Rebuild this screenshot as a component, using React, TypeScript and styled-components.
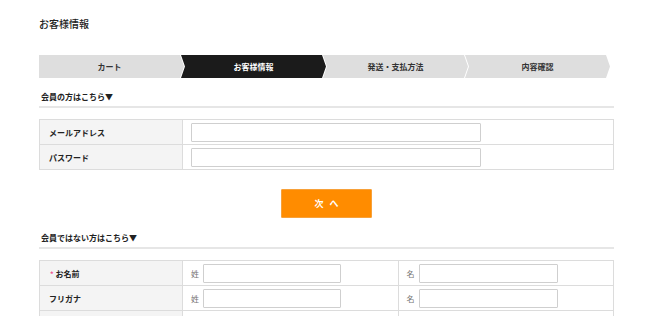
import styled, { createGlobalStyle } from "styled-components";

const GlobalStyle = createGlobalStyle`
  html, body {
    margin: 0;
    padding: 0;
    background: #fff;
    overflow: hidden;
  }
  body {
    font-family: "Noto Sans CJK JP", "Liberation Sans", sans-serif;
    color: #222;
  }
`;

const Page = styled.div`
  width: 575px;
  padding: 17px 0 0 39px;
`;

const Title = styled.h1`
  margin: 0;
  font-size: 10px;
  line-height: 14px;
  font-weight: 500;
  color: #222;
`;

const Steps = styled.ol`
  display: flex;
  margin: 24px 0 0;
  padding: 0;
  list-style: none;
  height: 23px;
`;

const Step = styled.li<{ $active?: boolean; $first?: boolean }>`
  width: 145px;
  height: 23px;
  margin-left: ${({ $first }) => ($first ? "0" : "-3px")};
  padding: 0 4px 0 ${({ $first }) => ($first ? "0" : "4px")};
  box-sizing: border-box;
  display: flex;
  align-items: center;
  justify-content: center;
  font-size: 8px;
  font-weight: 700;
  background: ${({ $active }) => ($active ? "#1b1b1b" : "#dedede")};
  color: ${({ $active }) => ($active ? "#fff" : "#333")};
  clip-path: ${({ $first }) =>
    $first
      ? "polygon(0 0, calc(100% - 4px) 0, 100% 50%, calc(100% - 4px) 100%, 0 100%)"
      : "polygon(0 0, calc(100% - 4px) 0, 100% 50%, calc(100% - 4px) 100%, 0 100%, 4px 50%)"};
`;

const SectionHead = styled.h2<{ $gap: number }>`
  margin: ${({ $gap }) => $gap}px 0 0;
  padding: 0 0 3px 2px;
  font-size: 8px;
  line-height: 12px;
  font-weight: 700;
  color: #222;
  border-bottom: 2px solid #e6e6e6;
`;

const Table = styled.table`
  width: 575px;
  margin-top: 11px;
  border-collapse: collapse;
  table-layout: fixed;
  border: 1px solid #dcdcdc;
`;

const LabelCell = styled.th`
  width: 143px;
  height: 25px;
  padding: 0 0 0 9px;
  box-sizing: border-box;
  text-align: left;
  font-size: 8px;
  font-weight: 700;
  color: #222;
  background: #f4f4f4;
  border: 1px solid #dcdcdc;
`;

const Cell = styled.td`
  height: 25px;
  padding: 0 0 0 8px;
  box-sizing: border-box;
  border: 1px solid #dcdcdc;
`;

const FieldRow = styled.div`
  display: flex;
  align-items: center;
  gap: 4px;
`;

const Prefix = styled.span`
  width: 8px;
  font-size: 8px;
  color: #777;
`;

const Input = styled.input<{ $w: number }>`
  display: block;
  width: ${({ $w }) => $w}px;
  height: 19px;
  box-sizing: border-box;
  margin: 0;
  padding: 0 4px;
  border: 1px solid #cfcfcf;
  border-radius: 1px;
  background: #fff;
  font-size: 9px;
  outline: none;
`;

const Required = styled.span`
  color: #f0508c;
  font-size: 7px;
  margin: 0 2px 0 1px;
`;

const NextButton = styled.button`
  display: block;
  width: 91px;
  height: 29px;
  margin: 19px auto 0;
  padding: 0;
  border: 1px solid #f7a13a;
  border-radius: 1px;
  background: #ff8c00;
  color: #fff;
  font-family: "Noto Sans CJK JP", sans-serif;
  font-size: 9px;
  font-weight: 700;
  letter-spacing: 6px;
  text-indent: 6px;
`;

const steps = ["カート", "お客様情報", "発送・支払方法", "内容確認"];

function NameRow({ label, required }: { label: string; required?: boolean }) {
  return (
    <tr>
      <LabelCell>
        {required && <Required>*</Required>}
        {label}
      </LabelCell>
      <Cell>
        <FieldRow>
          <Prefix>姓</Prefix>
          <Input $w={138} />
        </FieldRow>
      </Cell>
      <Cell>
        <FieldRow>
          <Prefix>名</Prefix>
          <Input $w={139} />
        </FieldRow>
      </Cell>
    </tr>
  );
}

function App() {
  return (
    <>
      <GlobalStyle />
      <Page>
        <Title>お客様情報</Title>
        <Steps>
          {steps.map((s, i) => (
            <Step key={s} $first={i === 0} $active={i === 1}>
              {s}
            </Step>
          ))}
        </Steps>

        <SectionHead $gap={13}>会員の方はこちら▼</SectionHead>
        <Table>
          <tbody>
            <tr>
              <LabelCell>メールアドレス</LabelCell>
              <Cell>
                <Input $w={290} />
              </Cell>
            </tr>
            <tr>
              <LabelCell>パスワード</LabelCell>
              <Cell>
                <Input $w={290} type="password" />
              </Cell>
            </tr>
          </tbody>
        </Table>

        <NextButton>次へ</NextButton>

        <SectionHead $gap={14}>会員ではない方はこちら▼</SectionHead>
        <Table>
          <tbody>
            <NameRow label="お名前" required />
            <NameRow label="フリガナ" />
            <tr>
              <LabelCell />
              <Cell />
              <Cell />
            </tr>
          </tbody>
        </Table>
      </Page>
    </>
  );
}

export default App;
